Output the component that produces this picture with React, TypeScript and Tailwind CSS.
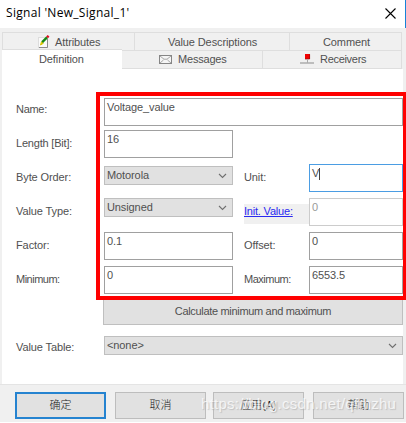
import React from 'react';

const FONT = "font-['Liberation_Sans','Noto_Sans_CJK_SC',sans-serif]";

function Label({ children, className = '' }: { children: React.ReactNode; className?: string }) {
  return <div className={`h-[34px] leading-[34px] whitespace-nowrap ${className}`}>{children}</div>;
}

function Field({ value, className = '' }: { value: string; className?: string }) {
  return (
    <div className={`h-7 border bg-white pl-[2px] pt-px leading-[15px] whitespace-nowrap ${className}`}>{value}</div>
  );
}

function Combo({ value, className = '' }: { value: string; className?: string }) {
  return (
    <div
      className={`flex h-[19px] items-center justify-between border border-[#bfbfbf] bg-[#e1e1e1] pl-[2px] pr-[5px] leading-[17px] ${className}`}
    >
      <span className="-mt-px">{value}</span>
      <svg width="9" height="6" viewBox="0 0 9 6" fill="none" stroke="#707070" strokeWidth="1.1">
        <path d="M1 1l3.5 3.5L8 1" />
      </svg>
    </div>
  );
}

function NoteIcon() {
  return (
    <svg width="12" height="13" viewBox="0 0 12 13" fill="none" className="shrink-0">
      <rect x="0.5" y="2.5" width="9" height="10" fill="#fafafa" stroke="#c4c4c4" strokeDasharray="1 1" />
      <path d="M9.5 4v8.5H1" stroke="#8c8c8c" />
      <path d="M2.5 10l1-3.2 1.8 1.5z" fill="#e8d800" stroke="#d5c400" />
      <path d="M4.2 7.2L9 2.4" stroke="#138713" strokeWidth="2.4" />
      <path d="M9 2.4l1.6-1.6" stroke="#e00f20" strokeWidth="2.4" />
    </svg>
  );
}

function MailIcon() {
  return (
    <svg width="13" height="9" viewBox="0 0 13 9" fill="none" stroke="#858585" className="shrink-0">
      <rect x="0.5" y="0.5" width="12" height="8" fill="#f5f5f5" />
      <path d="M1 1l4 3.2h3L12 1M1 8l3.5-3M12 8L8.5 5" strokeWidth="0.7" />
    </svg>
  );
}

function NodeIcon() {
  return (
    <svg width="14" height="10" viewBox="0 0 14 10" className="-mt-px shrink-0">
      <rect x="5" y="0" width="5" height="5" fill="#f00000" />
      <path d="M5 5h4.6V0.5" fill="none" stroke="#8d1010" strokeWidth="0.7" />
      <path d="M7.5 5.5v3" stroke="#aaa" />
      <path d="M0 9h14" stroke="#8a8a8a" />
    </svg>
  );
}

function DialogButton({
  children,
  primary = false,
  className = '',
}: {
  children: React.ReactNode;
  primary?: boolean;
  className?: string;
}) {
  return (
    <div
      className={`flex h-[27px] w-[91px] items-center justify-center bg-[#e1e1e1] text-[11px] font-light text-[#222] ${
        primary ? 'border-2 border-[#2583d0]' : 'border border-[#bdbdbd]'
      } ${className}`}
    >
      {children}
    </div>
  );
}

export default function App() {
  return (
    <div
      className={`relative flex h-[423px] w-[406px] flex-col overflow-hidden border-b border-white bg-[#f0f0f0] text-[11px] tracking-[-0.1px] text-[#505050] ${FONT}`}
    >
      <header className="flex h-7 shrink-0 items-start justify-between border-r border-[#1683d8] bg-white pl-[6px] pr-[9px]">
        <h1 className="pt-[5px] font-['Open_Sans','Noto_Sans',sans-serif] text-[12px] leading-4 tracking-[0.3px] text-black">
          Signal &#39;New_Signal_1&#39;
        </h1>
        <svg width="11" height="11" viewBox="0 0 11 11" className="mt-2" stroke="#000" strokeWidth="1.1">
          <path d="M0.5 0.5l10 10M10.5 0.5l-10 10" />
        </svg>
      </header>

      <nav className="mt-1 shrink-0 pl-[2px]">
        <div className="flex h-[18px] w-[400px] border border-b-0 border-[#dedede] leading-[18px]">
          <div className="flex w-[132px] items-center gap-[5px] border-r border-[#dedede] pl-[35px]">
            <NoteIcon />
            <span>Attributes</span>
          </div>
          <div className="w-[155px] border-r border-[#dedede] pl-[33px]">Value Descriptions</div>
          <div className="flex-1 pl-[33px]">Comment</div>
        </div>
        <div className="flex h-[19px] w-[400px]">
          <div className="-mt-px h-5 w-[120px] border-t border-[#dedede] bg-white pl-[37px] leading-[19px]">Definition</div>
          <div className="flex w-[141px] items-center gap-[6px] border border-l-0 border-[#dedede] pl-[37px]">
            <MailIcon />
            <span className="tracking-[-0.2px]">Messages</span>
          </div>
          <div className="flex flex-1 items-center gap-[6px] border border-l-0 border-[#dedede] pl-[37px]">
            <NodeIcon />
            <span className="tracking-[-0.3px]">Receivers</span>
          </div>
        </div>
      </nav>

      <main className="ml-[2px] h-[315px] w-[401px] shrink-0 bg-white pt-[23px]">
        <div className="flex">
          <div className="w-[102px] pl-[14px]">
            <Label className="tracking-[-0.3px]">Name:</Label>
            <Label className="tracking-[-0.2px]">Length [Bit]:</Label>
            <Label>Byte Order:</Label>
            <Label>Value Type:</Label>
            <Label>Factor:</Label>
            <Label className="tracking-[-0.5px]">Minimum:</Label>
          </div>
          <div className="w-[299px]">
            <div className="h-[34px] pt-[6px]">
              <Field value="Voltage_value" className="border-[#a0a0a0]" />
            </div>
            <div className="flex">
              <div className="w-[129px]">
                <div className="h-[34px] pt-1"><Field value="16" className="border-[#a0a0a0]" /></div>
                <div className="h-[34px] pt-[6px]"><Combo value="Motorola" /></div>
                <div className="h-[34px] pt-1"><Combo value="Unsigned" /></div>
                <div className="h-[34px] pt-1"><Field value="0.1" className="border-[#a0a0a0]" /></div>
                <div className="h-[34px] pt-1"><Field value="0" className="border-[#a0a0a0]" /></div>
              </div>
              <div className="w-[76px] pl-[11px] pt-[34px]">
                <Label>Unit:</Label>
                <div className="h-[34px] pt-[10px]">
                  <div className="h-5 bg-[#f0f0f0] leading-[14px] tracking-[-0.2px] text-[#2a2af0] underline">Init. Value:</div>
                </div>
                <Label>Offset:</Label>
                <Label className="tracking-[-0.5px]">Maximum:</Label>
              </div>
              <div className="w-[94px] pt-[34px]">
                <div className="h-[34px] pt-1">
                  <div className="flex h-7 border border-[#4b9de3] bg-white pl-[2px] pt-px leading-[15px]">
                    <span>V</span>
                    <span className="mt-[2px] h-3 w-px bg-[#444]" />
                  </div>
                </div>
                <div className="h-[34px] pt-1"><Field value="0" className="border-[#cccccc] text-[#999]" /></div>
                <div className="h-[34px] pt-1"><Field value="0" className="border-[#a0a0a0]" /></div>
                <div className="h-[34px] pt-1"><Field value="6553.5" className="border-[#a0a0a0]" /></div>
              </div>
            </div>
          </div>
        </div>
        <div className="ml-[101px] mt-px flex h-7 items-center justify-center border border-[#bfbfbf] bg-[#e1e1e1] tracking-[-0.32px]">
          Calculate minimum and maximum
        </div>
        <div className="mt-[5px] flex">
          <Label className="w-[102px] pl-[14px]">Value Table:</Label>
          <Combo value="<none>" className="mt-[6px] flex-1" />
        </div>
      </main>

      <footer className="flex border-t border-[#e4e4e4] pl-[15px] pt-[7px]">
        <DialogButton primary>确定</DialogButton>
        <DialogButton className="ml-[9px]">取消</DialogButton>
        <DialogButton className="ml-[7px]">应用(A)</DialogButton>
        <DialogButton className="ml-[9px]">帮助</DialogButton>
      </footer>

      <div className="absolute left-[96px] top-[92px] h-[208px] w-[311px] border-4 border-[#ff0000]" />
      <div className="absolute left-[201px] top-[396px] whitespace-nowrap text-[15px] leading-4 tracking-[0.27px] text-white/75 [text-shadow:1px_1px_1px_#aaaaaa99]">
        https://blog.csdn.net/qfmzhu
      </div>
    </div>
  );
}
